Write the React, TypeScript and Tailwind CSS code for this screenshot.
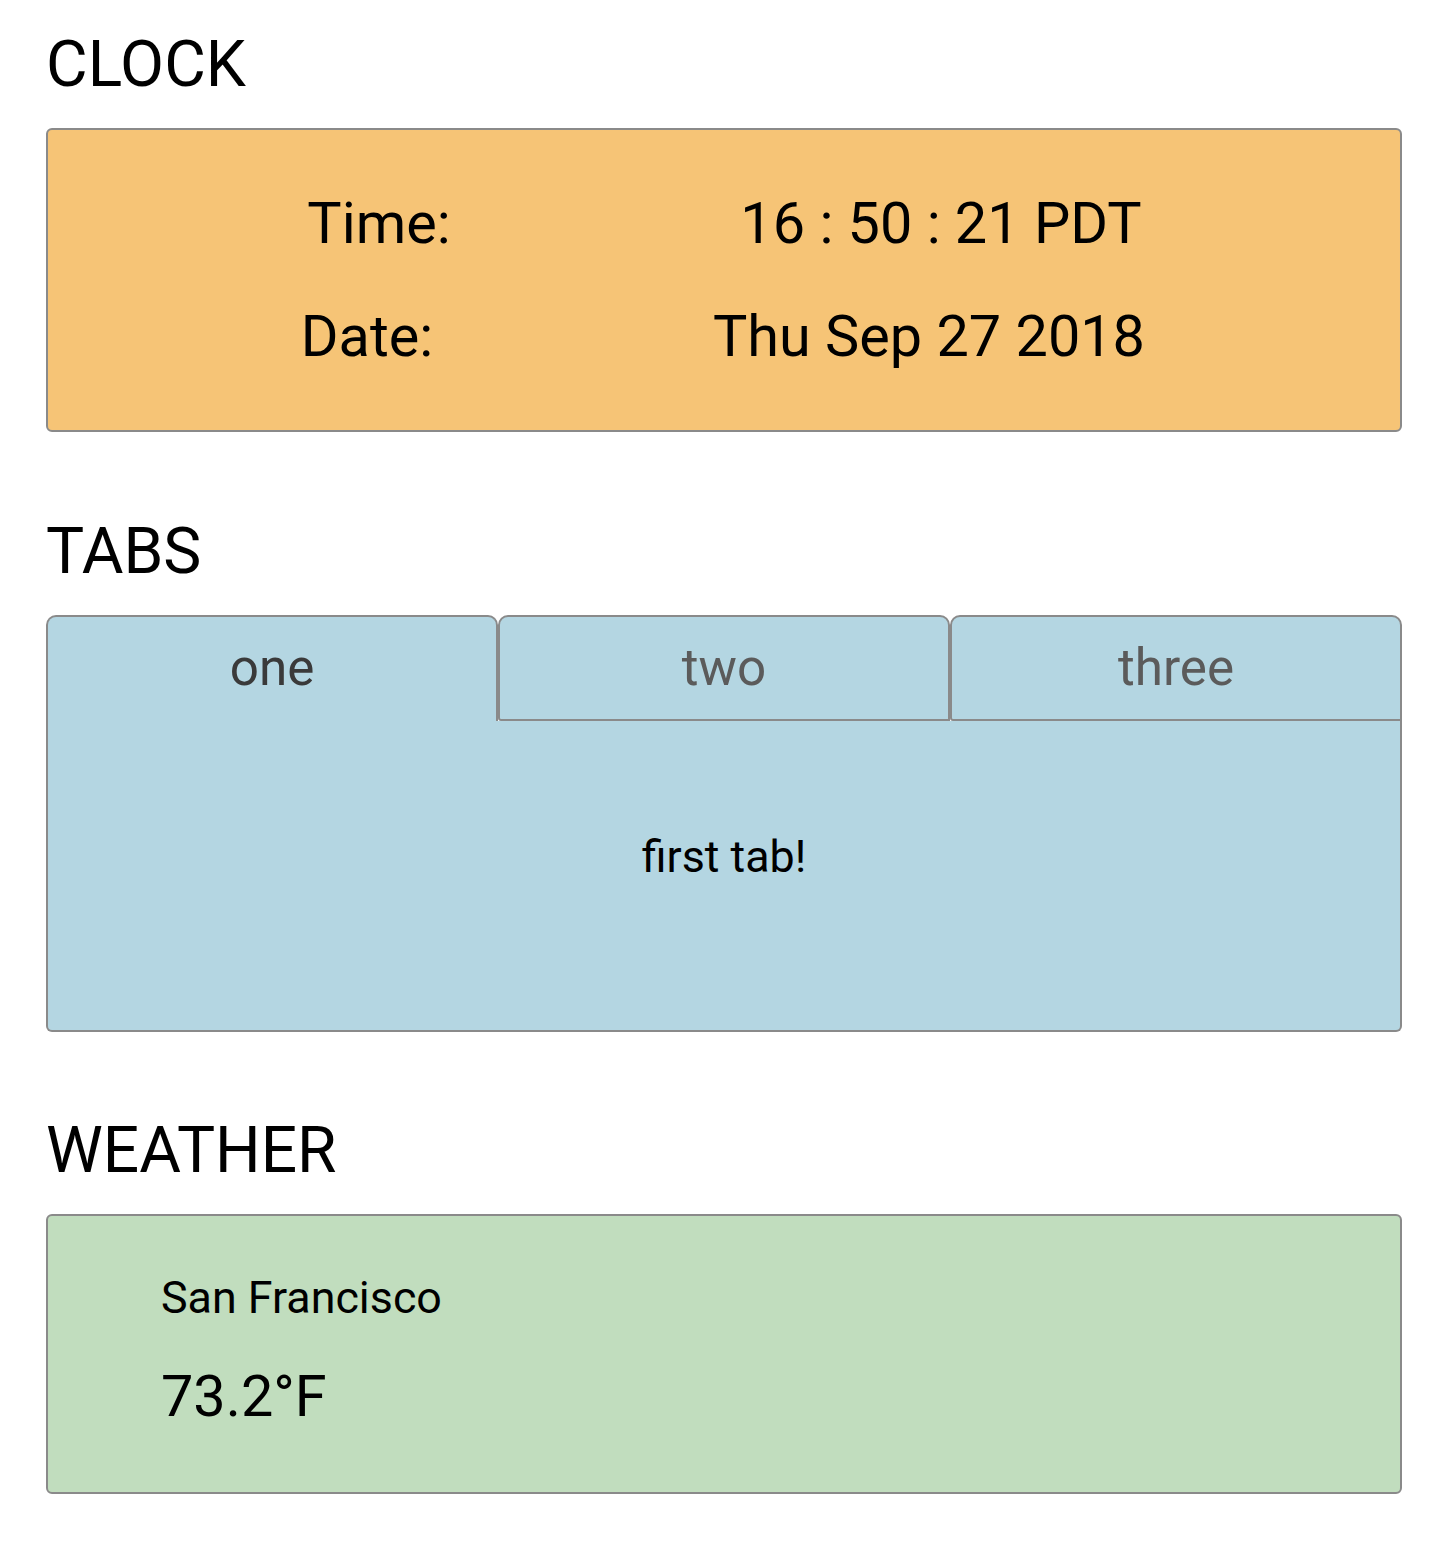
import React from 'react';

const tabs = ['one', 'two', 'three'];

function Heading({ children }: { children: React.ReactNode }) {
  return <h1 className="text-[64px] leading-[75px] font-normal text-black mb-[26px]">{children}</h1>;
}

export default function App() {
  const active = 0;
  return (
    <div className="min-h-screen bg-white pl-[46px] pr-[48px] pt-[27px] font-['Roboto',sans-serif] text-black">
      <Heading>CLOCK</Heading>
      <div className="rounded-[6px] border-2 border-[#8a8a8a] bg-[#f6c476] py-[60px] text-[57.6px] leading-[67px]">
        <div className="grid grid-cols-[562px_562px] pl-[50px]">
          <div className="text-center">Time:</div>
          <div className="text-center">16 : 50 : 21 PDT</div>
        </div>
        <div className="mt-[46px] grid grid-cols-[562px_562px] pl-[38px]">
          <div className="text-center">Date:</div>
          <div className="text-center">Thu Sep 27 2018</div>
        </div>
      </div>

      <div className="mt-[82px]">
        <Heading>TABS</Heading>
        <div className="grid grid-cols-3">
          {tabs.map((t, i) => (
            <div
              key={t}
              className={
                i === active
                  ? 'rounded-t-[10px] border-2 border-b-0 border-[#8a8a8a] bg-[#b4d6e2] pt-[21px] pb-[24px] text-center text-[51.2px] leading-[59px] text-[#3a3a3a]'
                  : 'rounded-t-[10px] rounded-bl-[3px] border-2 border-[#8a8a8a] bg-[#b4d6e2] pt-[21px] pb-[22px] text-center text-[51.2px] leading-[59px] text-[#5b5b5b]'
              }
            >
              {t}
            </div>
          ))}
        </div>
        <div className="rounded-b-[6px] border-2 border-t-0 border-[#8a8a8a] bg-[#b4d6e2] pt-[110px] pb-[147px] text-center text-[44.8px] leading-[52px]">
          first tab!
        </div>
      </div>

      <div className="mt-[81px]">
        <Heading>WEATHER</Heading>
        <div className="rounded-[6px] border-2 border-[#8a8a8a] bg-[#c1ddbe] pl-[113px] pt-[56px] pb-[62px]">
          <div className="text-[44.8px] leading-[52px]">San Francisco</div>
          <div className="mt-[39px] text-[57.6px] leading-[67px]">73.2°F</div>
        </div>
      </div>
    </div>
  );
}
